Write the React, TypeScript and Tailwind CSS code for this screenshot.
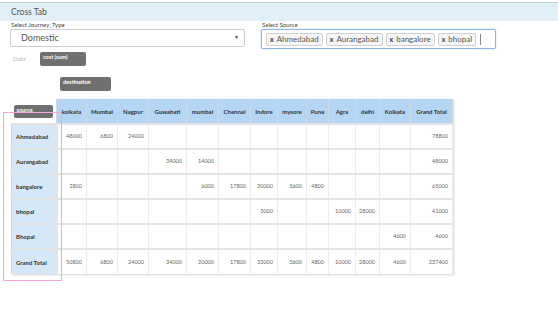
const cols = ["kolkata", "Mumbai", "Nagpur", "Guwahati", "mumbai", "Chennai", "Indore", "mysore", "Pune", "Agra", "delhi", "Kolkata", "Grand Total"];
const widths = ["w-[30px]", "w-[31px]", "w-[31px]", "w-[38px]", "w-[32px]", "w-[32px]", "w-[27px]", "w-[29px]", "w-[22px]", "w-[27px]", "w-[24px]", "w-[31px]", "w-[42px]"];

const rows: [string, (number | null)[]][] = [
  ["Ahmedabad", [48000, 6800, 24000, null, null, null, null, null, null, null, null, null, 78800]],
  ["Aurangabad", [null, null, null, 34000, 14000, null, null, null, null, null, null, null, 48000]],
  ["bangalore", [2800, null, null, null, 6000, 17800, 30000, 3600, 4800, null, null, null, 65000]],
  ["bhopal", [null, null, null, null, null, null, 3000, null, null, 10000, 28000, null, 41000]],
  ["Bhopal", [null, null, null, null, null, null, null, null, null, null, null, 4600, 4600]],
  ["Grand Total", [50800, 6800, 24000, 34000, 20000, 17800, 33000, 3600, 4800, 10000, 28000, 4600, 237400]],
];

const tags = ["Ahmedabad", "Aurangabad", "bangalore", "bhopal"];

function Chip({ label, className }: { label: string; className?: string }) {
  return (
    <div className={`h-[14px] rounded-[2px] bg-[#6f6f6f] px-[3px] pt-[2px] text-[5.5px] leading-[7px] font-bold text-white ${className ?? ""}`}>
      {label}
    </div>
  );
}

export default function App() {
  return (
    <div className="relative h-[309px] w-[558px] overflow-hidden bg-white text-[#555] [font-family:'Lato','Liberation_Sans',sans-serif]">
      <div className="mt-[2px] flex h-[19px] items-center border-t border-[#c7cfd5] bg-[#e0eff8] pl-[11px] text-[8.5px] text-[#555]">
        Cross Tab
      </div>

      <div className="flex gap-[16px] pl-[10px]">
        <div className="w-[235px]">
          <div className="pl-[1px] text-[6px] leading-[7px] text-[#444]">Select Journey_Type</div>
          <div className="mt-[1px] flex h-[18px] items-center justify-between rounded-[2px] border border-[#ccc] bg-white pl-[10px] pr-[5px] text-[9px] text-[#555]">
            <span>Domestic</span>
            <span className="text-[5px] text-[#333]">▼</span>
          </div>
        </div>
        <div className="w-[235px]">
          <div className="pl-[1px] text-[6px] leading-[7px] text-[#444]">Select Source</div>
          <div className="mt-[1px] flex h-[20px] items-center gap-[3px] rounded-[2px] border border-[#8fb3e8] bg-white pl-[4px] shadow-[0_0_2px_#b9cff0]">
            {tags.map((t) => (
              <span key={t} className="flex h-[13px] items-center gap-[3px] rounded-[2px] border border-[#d0d0d0] bg-[#f6f6f6] px-[3px] text-[8px] text-[#555]">
                <span className="text-[7px] font-bold text-[#333]">x</span>
                {t}
              </span>
            ))}
            <span className="ml-[1px] h-[11px] w-px bg-[#888]" />
          </div>
        </div>
      </div>

      <div className="mt-[3px] flex items-start pl-[13px]">
        <span className="mt-[3px] w-[27px] text-[6px] leading-[7px] text-[#b5b5b5]">Data</span>
        <Chip label="cost (sum)" className="w-[46px]" />
      </div>

      <div className="mt-[11px] pl-[60px]">
        <Chip label="destination" className="h-[13px] w-[51px]" />
      </div>

      <table className="mt-[8px] ml-[11px] table-fixed border-collapse shadow-[1px_1px_2px_#d6d6d6]">
        <thead>
          <tr className="h-[25px]">
            <th className="w-[45px] bg-white p-0 align-middle">
              <div className="ml-[2px] h-[13px] w-[39px] rounded-[2px] bg-[#6f6f6f] pl-[3px] pt-[2px] text-left text-[5.5px] leading-[7px] font-bold text-white">
                source
              </div>
            </th>
            {cols.map((c, i) => (
              <th key={c} className={`${widths[i]} border-x border-[#c9d9e8] bg-[#b4d5f3] p-0 text-center text-[6px] font-bold text-[#333]`}>
                {c}
              </th>
            ))}
          </tr>
        </thead>
        <tbody>
          {rows.map(([label, vals]) => (
            <tr key={label} className="h-[25px] border-t-2 border-[#e3e3e3]">
              <th className="border-l border-r-2 border-[#c9d9e8] border-r-[#dfe6ec] bg-[#d6e8f8] p-0 pl-[4px] text-left text-[6px] font-bold text-[#333]">
                {label}
              </th>
              {vals.map((v, i) => (
                <td key={i} className="border-x border-[#ececec] p-0 pr-[4px] text-right text-[5.5px] text-[#666]">
                  {v ?? ""}
                </td>
              ))}
            </tr>
          ))}
        </tbody>
      </table>

      <div className="absolute left-[3px] top-[112px] h-[169px] w-[59px] border border-[#f5a3d3]" />
    </div>
  );
}
